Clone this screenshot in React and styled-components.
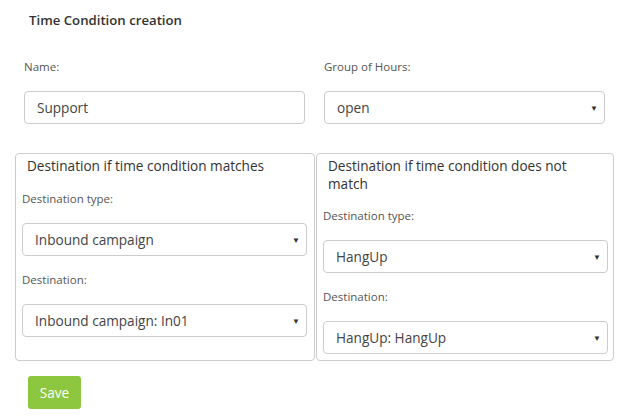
import React from "react";
import styled, { createGlobalStyle } from "styled-components";

const Global = createGlobalStyle`
  html, body { margin: 0; padding: 0; background: #fff; }
  body { font-family: "Open Sans", Lato, sans-serif; color: #333; }
`;

const Page = styled.div`
  width: 644px;
  padding-top: 10px;
`;

const Heading = styled.div`
  padding-left: 29px;
  font-size: 13.2px;
  line-height: 20px;
  font-weight: 600;
  color: #333;
`;

const TopRow = styled.div`
  display: grid;
  grid-template-columns: 281px 281px;
  column-gap: 19px;
  padding-left: 24px;
  margin-top: 28px;
`;

const Field = styled.div`
  display: flex;
  flex-direction: column;
  margin-bottom: ${(p) => p.$mb ?? 15}px;
`;

const Label = styled.label`
  font-size: 11.5px;
  line-height: 17px;
  color: #555;
  margin-bottom: 16px;
`;

const Box = styled.div`
  box-sizing: border-box;
  height: 33px;
  width: ${(p) => p.$w ?? 281}px;
  border: 1px solid #ccc;
  border-radius: 4px;
  display: flex;
  align-items: center;
  padding: 0 6px 0 12px;
  font-size: 13.6px;
  color: #444;
  background: #fff;
`;

const BoxText = styled.span`
  flex: 1;
`;

const Arrow = styled.span`
  font-size: 8px;
  color: #333;
`;

const Panels = styled.div`
  display: flex;
  align-items: stretch;
  gap: 1px;
  margin-left: 15px;
  margin-top: 29px;
`;

const Panel = styled.div`
  box-sizing: border-box;
  width: ${(p) => p.$w}px;
  border: 1px solid #ccc;
  border-radius: 4px;
  padding: 3px 6px ${(p) => p.$pb}px 6px;
`;

const PanelTitle = styled.div`
  font-size: 13.6px;
  line-height: 18px;
  color: #333;
  padding-left: 5px;
  margin-bottom: ${(p) => p.$mb}px;
`;

const SaveButton = styled.button`
  margin: 15px 0 0 28px;
  width: 53px;
  height: 33px;
  border: none;
  border-radius: 3px;
  background: #8dc63f;
  color: #fff;
  font-family: inherit;
  font-size: 13.6px;
  padding: 0;
`;

function Select({ value, w }) {
  return (
    <Box $w={w}>
      <BoxText>{value}</BoxText>
      <Arrow>▼</Arrow>
    </Box>
  );
}

export default function App() {
  return (
    <Page>
      <Global />
      <Heading>Time Condition creation</Heading>
      <TopRow>
        <Field $mb={0}>
          <Label>Name:</Label>
          <Box>Support</Box>
        </Field>
        <Field $mb={0}>
          <Label>Group of Hours:</Label>
          <Select value="open" />
        </Field>
      </TopRow>
      <Panels>
        <Panel $w={300} $pb={22}>
          <PanelTitle $mb={15}>Destination if time condition matches</PanelTitle>
          <Field>
            <Label>Destination type:</Label>
            <Select value="Inbound campaign" w={285} />
          </Field>
          <Field $mb={0}>
            <Label>Destination:</Label>
            <Select value="Inbound campaign: In01" w={285} />
          </Field>
        </Panel>
        <Panel $w={298} $pb={6}>
          <PanelTitle $mb={14}>Destination if time condition does not match</PanelTitle>
          <Field>
            <Label>Destination type:</Label>
            <Select value="HangUp" w={285} />
          </Field>
          <Field $mb={0}>
            <Label>Destination:</Label>
            <Select value="HangUp: HangUp" w={285} />
          </Field>
        </Panel>
      </Panels>
      <SaveButton>Save</SaveButton>
    </Page>
  );
}
